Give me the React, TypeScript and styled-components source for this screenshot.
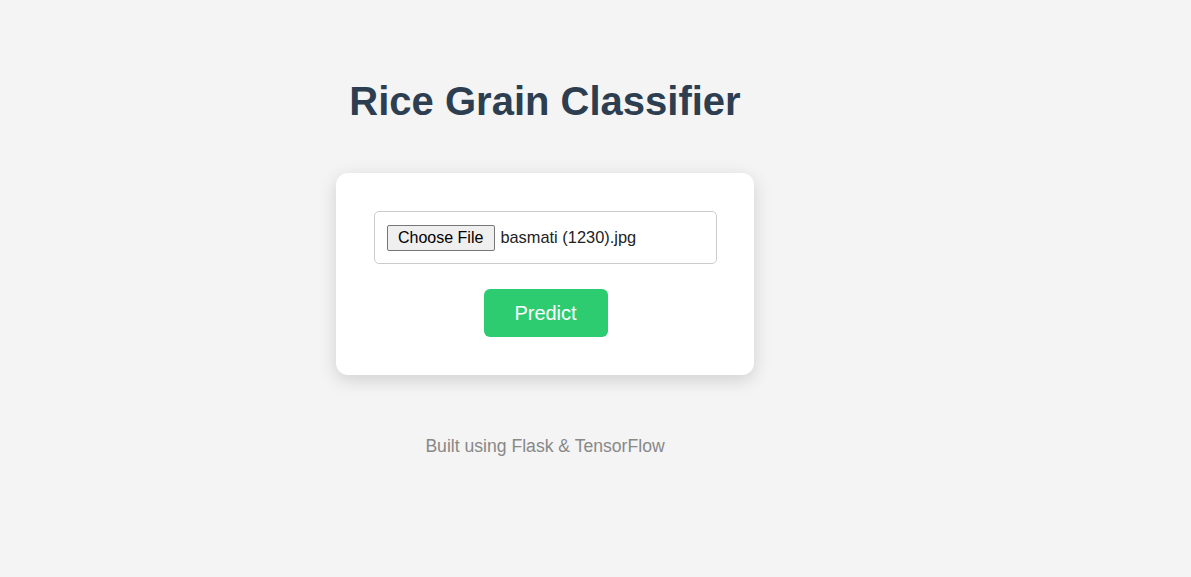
import React from "react";
import styled, { createGlobalStyle } from "styled-components";

const Global = createGlobalStyle`
  html, body { margin: 0; padding: 0; background: #f4f4f4; }
  body { font-family: "Liberation Sans", Arial, sans-serif; }
`;

const Page = styled.div`
  width: 1090px;
  display: flex;
  flex-direction: column;
  align-items: center;
  padding-top: 78px;
`;

const Title = styled.h1`
  margin: 0;
  font-size: 40px;
  line-height: 46px;
  font-weight: bold;
  color: #2c3e50;
`;

const Card = styled.form`
  margin-top: 49px;
  width: 418px;
  box-sizing: border-box;
  padding: 38px 37px 38px 38px;
  background: #fff;
  border-radius: 12px;
  box-shadow: 0 5px 18px rgba(0, 0, 0, 0.15);
  display: flex;
  flex-direction: column;
  align-items: center;
  gap: 25px;
`;

const FileBox = styled.label`
  width: 100%;
  box-sizing: border-box;
  height: 53px;
  border: 1px solid #ccc;
  border-radius: 5px;
  padding: 0 12px;
  display: flex;
  align-items: center;
  gap: 5px;
  cursor: pointer;
`;

const HiddenInput = styled.input`
  display: none;
`;

const ChooseButton = styled.span`
  display: inline-flex;
  align-items: center;
  box-sizing: border-box;
  height: 26px;
  padding: 0 11px 0 10px;
  background: #efefef;
  border: 1px solid #767676;
  border-radius: 2px;
  font-size: 16px;
  color: #000;
`;

const FileName = styled.span`
  font-size: 16.4px;
  color: #222;
`;

const PredictButton = styled.button`
  width: 124px;
  height: 48px;
  border: none;
  border-radius: 6px;
  background: #2ecc71;
  color: #fff;
  font-family: "Liberation Sans", Arial, sans-serif;
  font-size: 20px;
  cursor: pointer;
`;

const Footer = styled.p`
  margin: 61px 0 0;
  font-size: 17.6px;
  line-height: 20px;
  color: #888;
`;

export default function App() {
  return (
    <>
      <Global />
      <Page>
        <Title>Rice Grain Classifier</Title>
        <Card onSubmit={(e) => e.preventDefault()}>
          <FileBox>
            <HiddenInput type="file" />
            <ChooseButton>Choose File</ChooseButton>
            <FileName>basmati (1230).jpg</FileName>
          </FileBox>
          <PredictButton type="submit">Predict</PredictButton>
        </Card>
        <Footer>Built using Flask &amp; TensorFlow</Footer>
      </Page>
    </>
  );
}
